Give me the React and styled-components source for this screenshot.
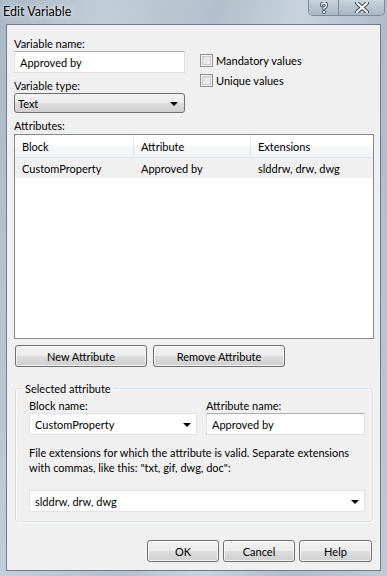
import React from "react";
import styled, { createGlobalStyle } from "styled-components";

const Global = createGlobalStyle`
  html, body { margin: 0; padding: 0; background: #b9c6d3; }
  body { font-family: Lato, "Liberation Sans", sans-serif; font-size: 11px; color: #000; }
  * { box-sizing: border-box; }
`;

const Window = styled.div`
  width: 387px;
  height: 576px;
  display: flex;
  flex-direction: column;
  background: linear-gradient(100deg, #a9b8c6 0%, #c2ced9 22%, #b2c0cd 45%, #c8d3dd 62%, #aebccb 80%, #bfcad5 100%);
  overflow: hidden;
`;

const TitleBar = styled.div`
  height: 24px;
  display: flex;
  align-items: flex-start;
  justify-content: space-between;
  padding-left: 3px;
`;

const Title = styled.div`
  font-size: 12.5px;
  line-height: 24px;
  color: #000;
  text-shadow: 0 0 8px rgba(255,255,255,0.9), 0 0 3px rgba(255,255,255,0.8);
`;

const CaptionButtons = styled.div`
  display: flex;
  margin-right: 2px;
  border: 1px solid #7d8a97;
  border-top: none;
  border-radius: 0 0 5px 5px;
  height: 16px;
  overflow: hidden;
  box-shadow: inset 0 0 0 1px rgba(255,255,255,0.45);
`;

const CaptionButton = styled.div`
  width: ${p => p.$w}px;
  height: 100%;
  display: flex;
  align-items: center;
  justify-content: center;
  background: linear-gradient(#c9d4de, #b7c4d1 50%, #a9b7c5);
  & + & { border-left: 1px solid #7d8a97; }
`;

const Client = styled.div`
  flex: 1;
  margin: 0 6px 5px 6px;
  background: #f0f0f0;
  border: 1px solid #6f7c89;
  padding: 11px 8px 0 7px;
  display: flex;
  flex-direction: column;
`;

const TopGrid = styled.div`
  display: grid;
  grid-template-columns: 171px 1fr;
  column-gap: 15px;
`;

const Column = styled.div`
  display: flex;
  flex-direction: column;
`;

const Label = styled.div`
  height: 15px;
  line-height: 15px;
  white-space: nowrap;
  margin-top: ${p => p.$mt || 0}px;
`;

const TextBox = styled.div`
  height: 22px;
  background: #fff;
  border: 1px solid #dcdfe3;
  border-top-color: #abadb3;
  padding-left: 5px;
  display: flex;
  align-items: center;
  white-space: nowrap;
`;

const ComboButton = styled.div`
  height: 20px;
  border: 1px solid #707070;
  border-radius: 3px;
  background: linear-gradient(#f2f2f2 0%, #ebebeb 50%, #dddddd 51%, #cfcfcf 100%);
  display: flex;
  align-items: center;
  justify-content: space-between;
  padding: 0 6px 0 3px;
`;

const Arrow = styled.span`
  width: 0;
  height: 0;
  border-left: 4px solid transparent;
  border-right: 4px solid transparent;
  border-top: 4px solid #000;
  margin-top: 1px;
`;

const CheckList = styled.div`
  display: flex;
  flex-direction: column;
  gap: 6px;
  padding-top: 17px;
`;

const CheckRow = styled.label`
  display: flex;
  align-items: center;
  gap: 3px;
  height: 14px;
`;

const CheckBox = styled.span`
  width: 13px;
  height: 13px;
  border: 1px solid #8f8f8f;
  background: linear-gradient(135deg, #dcdcdc, #f5f5f5);
  box-shadow: inset 0 0 0 1px #f4f4f4, inset 0 0 0 2px #c9c9c9;
`;

const ListBox = styled.div`
  margin-top: 1px;
  height: 205px;
  width: 360px;
  background: #fff;
  border: 1px solid #828790;
  display: flex;
  flex-direction: column;
`;

const ListRow = styled.div`
  display: grid;
  grid-template-columns: 119px 117px 1fr;
  height: ${p => (p.$header ? 23 : 20)}px;
  align-items: center;
  background: ${p => (p.$header ? "linear-gradient(#ffffff, #ffffff 50%, #f7f8fa 51%, #f1f2f4)" : p.$selected ? "#f0f0f0" : "transparent")};
  border-bottom: ${p => (p.$header ? "1px solid #e3e5e8" : "none")};
`;

const Cell = styled.div`
  padding-left: 7px;
  white-space: nowrap;
  height: 100%;
  display: flex;
  align-items: center;
  border-right: ${p => (p.$sep ? "1px solid #e3e5e8" : "none")};
`;

const ButtonRow = styled.div`
  display: flex;
  gap: ${p => p.$gap || 6}px;
  margin-top: 6px;
  padding-left: 1px;
  justify-content: ${p => p.$end ? "flex-end" : "flex-start"};
`;

const PushButton = styled.button`
  width: ${p => p.$w}px;
  height: 22px;
  font: inherit;
  color: #000;
  border: 1px solid #707070;
  border-radius: 3px;
  background: linear-gradient(#f2f2f2 0%, #ebebeb 50%, #dddddd 51%, #cfcfcf 100%);
  box-shadow: inset 0 0 0 1px rgba(255,255,255,0.7);
  padding: 0;
`;

const GroupBox = styled.fieldset`
  margin: 14px 0 0 1px;
  width: 358px;
  min-width: 0;
  border: 1px solid #d5dfe5;
  border-radius: 3px;
  padding: 2px 8px 9px 13px;
  box-shadow: inset 1px 1px 0 #fff, 1px 1px 0 #fff;
`;

const Legend = styled.legend`
  padding: 0 2px;
  margin-left: -6px;
  line-height: 15px;
`;

const GroupGrid = styled.div`
  display: grid;
  grid-template-columns: 168px 159px;
  column-gap: 9px;
`;

const WhiteCombo = styled.div`
  height: 22px;
  width: ${p => (p.$w ? p.$w + "px" : "auto")};
  background: #fff;
  border: 1px solid #e2e3ea;
  display: flex;
  align-items: center;
  justify-content: space-between;
  padding: 0 5px 0 5px;
  white-space: nowrap;
`;

const Description = styled.div`
  margin-top: 10px;
  line-height: 15px;
  height: 45px;
  white-space: nowrap;
`;

const Footer = styled.div`
  margin-top: auto;
  padding-bottom: 8px;
`;

function CloseGlyph() {
  return (
    <svg width="14" height="11" viewBox="0 0 14 11">
      <path d="M2 1 L12 10 M12 1 L2 10" stroke="#3c4a5a" strokeWidth="4" strokeLinecap="round" />
      <path d="M2 1 L12 10 M12 1 L2 10" stroke="#fff" strokeWidth="2" strokeLinecap="round" />
    </svg>
  );
}

function HelpGlyph() {
  return (
    <svg width="10" height="12" viewBox="0 0 10 12">
      <g fill="none" strokeLinecap="round">
        <path d="M2.5 3.5 Q2.5 1 5 1 Q7.5 1 7.5 3.3 Q7.5 5 5 6 L5 7" stroke="#3c4a5a" strokeWidth="3.2" />
        <path d="M2.5 3.5 Q2.5 1 5 1 Q7.5 1 7.5 3.3 Q7.5 5 5 6 L5 7" stroke="#fff" strokeWidth="1.4" />
      </g>
      <circle cx="5" cy="10" r="1.6" fill="#fff" stroke="#3c4a5a" strokeWidth="0.9" />
    </svg>
  );
}

export default function App() {
  return (
    <>
      <Global />
      <Window>
        <TitleBar>
          <Title>Edit Variable</Title>
          <CaptionButtons>
            <CaptionButton $w={29}><HelpGlyph /></CaptionButton>
            <CaptionButton $w={46}><CloseGlyph /></CaptionButton>
          </CaptionButtons>
        </TitleBar>
        <Client>
          <TopGrid>
            <Column>
              <Label>Variable name:</Label>
              <TextBox>Approved by</TextBox>
              <Label $mt={5}>Variable type:</Label>
              <ComboButton>
                <span>Text</span>
                <Arrow />
              </ComboButton>
            </Column>
            <CheckList>
              <CheckRow><CheckBox />Mandatory values</CheckRow>
              <CheckRow><CheckBox />Unique values</CheckRow>
            </CheckList>
          </TopGrid>
          <Label $mt={5}>Attributes:</Label>
          <ListBox>
            <ListRow $header>
              <Cell $sep>Block</Cell>
              <Cell $sep>Attribute</Cell>
              <Cell>Extensions</Cell>
            </ListRow>
            <ListRow $selected>
              <Cell>CustomProperty</Cell>
              <Cell>Approved by</Cell>
              <Cell>slddrw, drw, dwg</Cell>
            </ListRow>
          </ListBox>
          <ButtonRow>
            <PushButton $w={132}>New Attribute</PushButton>
            <PushButton $w={132}>Remove Attribute</PushButton>
          </ButtonRow>
          <GroupBox>
            <Legend>Selected attribute</Legend>
            <GroupGrid>
              <Column>
                <Label>Block name:</Label>
                <WhiteCombo>
                  <span>CustomProperty</span>
                  <Arrow />
                </WhiteCombo>
              </Column>
              <Column>
                <Label>Attribute name:</Label>
                <TextBox>Approved by</TextBox>
              </Column>
            </GroupGrid>
            <Description>
              File extensions for which the attribute is valid. Separate extensions<br />
              with commas, like this: "txt, gif, dwg, doc":
            </Description>
            <WhiteCombo $w={336}>
              <span>slddrw, drw, dwg</span>
              <Arrow />
            </WhiteCombo>
          </GroupBox>
          <Footer>
            <ButtonRow $end $gap={4}>
              <PushButton $w={72}>OK</PushButton>
              <PushButton $w={72}>Cancel</PushButton>
              <PushButton $w={73}>Help</PushButton>
            </ButtonRow>
          </Footer>
        </Client>
      </Window>
    </>
  );
}
